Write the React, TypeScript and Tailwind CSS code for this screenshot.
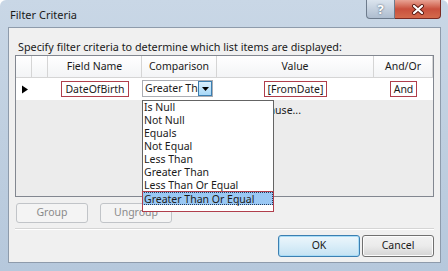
import React from 'react';

const items = [
  'Is Null',
  'Not Null',
  'Equals',
  'Not Equal',
  'Less Than',
  'Greater Than',
  'Less Than Or Equal',
  'Greater Than Or Equal',
];

function TitleButtons() {
  return (
    <div className="flex h-[19px] self-start mr-[7px]">
      <div className="w-[29px] h-[19px] rounded-bl-[4px] border border-[#6d7b8c] border-t-0 bg-gradient-to-b from-[#dbe4ee] to-[#aebdcf] flex items-center justify-center">
        <span className="text-[13px] font-bold text-white leading-none [text-shadow:0_0_2px_#34495f]">?</span>
      </div>
      <div className="w-[46px] h-[19px] rounded-br-[4px] border border-[#7a2a22] border-t-0 border-l-0 bg-gradient-to-b from-[#e8a394] via-[#c9503d] to-[#d36a4c] flex items-center justify-center">
        <svg width="14" height="11" viewBox="0 0 14 11">
          <path d="M3 2 L11 9 M11 2 L3 9" stroke="#5a1a12" strokeWidth="4" strokeLinecap="round" />
          <path d="M3 2 L11 9 M11 2 L3 9" stroke="#ffffff" strokeWidth="2.2" strokeLinecap="round" />
        </svg>
      </div>
    </div>
  );
}

function Annot({ children }: { children: React.ReactNode }) {
  return <span className="border border-[#b03e4c] px-[3px] leading-[13px] h-[16px] inline-flex items-center">{children}</span>;
}

export default function App() {
  return (
    <div className="w-[448px] h-[271px] overflow-hidden bg-gradient-to-b from-[#c9d7e6] via-[#bfcfe0] to-[#b6c8dc] flex flex-col rounded-t-[6px] font-['Noto_Sans','Liberation_Sans',sans-serif] text-[10.5px] text-[#1a1a1a]">
      <div className="h-[27px] flex items-start justify-between shrink-0">
        <span className="pl-[10px] pt-[7px] leading-[16px] text-[11px]">Filter Criteria</span>
        <TitleButtons />
      </div>

      <div className="mx-[7px] ml-[8px] h-[236px] bg-[#f0f0f0] border border-[#8e9bab] flex flex-col px-[6px]">
        <div className="pt-[11px] pl-[3px] leading-[16px] h-[27px] text-[10.8px]">
          Specify filter criteria to determine which list items are displayed:
        </div>

        <div className="h-[142px] border border-[#828790] bg-[#ececec] flex flex-col">
          <div className="grid grid-cols-[16px_16px_94px_75px_157px_59px] h-[22px] bg-gradient-to-b from-[#ffffff] to-[#f3f4f6] border-b border-[#d5d5d5]">
            <div className="border-r border-[#d5d5d5]" />
            <div className="border-r border-[#d5d5d5]" />
            <div className="border-r border-[#d5d5d5] flex items-center justify-center">Field Name</div>
            <div className="border-r border-[#d5d5d5] flex items-center justify-center">Comparison</div>
            <div className="border-r border-[#d5d5d5] flex items-center justify-center">Value</div>
            <div className="border-r border-[#d5d5d5] flex items-center justify-center">And/Or</div>
          </div>

          <div className="grid grid-cols-[16px_16px_94px_75px_157px_59px] h-[22px] bg-white">
            <div className="flex items-center justify-center pl-[1px]">
              <svg width="8" height="9" viewBox="0 0 8 9">
                <path d="M1 0.5 L7 4.5 L1 8.5 Z" fill="#000" />
              </svg>
            </div>
            <div />
            <div className="flex items-center justify-center">
              <Annot>DateOfBirth</Annot>
            </div>
            <div className="relative">
              <div className="mt-[2px] w-[71px] h-[17px] border border-[#abadb3] bg-white flex items-center overflow-hidden">
                <span className="pl-[2px] whitespace-nowrap flex-1 overflow-hidden leading-[13px]">Greater Than Or Equal</span>
                <div className="w-[14px] h-[15px] border border-[#3c7fb1] bg-gradient-to-b from-[#d9effc] to-[#a7d8f8] flex items-center justify-center shrink-0">
                  <svg width="7" height="4" viewBox="0 0 7 4">
                    <path d="M0 0 L7 0 L3.5 4 Z" fill="#000" />
                  </svg>
                </div>
              </div>

              <div className="absolute left-0 top-full w-[132px] z-10 bg-white border border-[#646464] border-b-0 pb-[6px] flex flex-col">
                {items.map((it, i) => (
                  <div
                    key={it}
                    className={
                      i === items.length - 1
                        ? 'h-[13px] leading-[12px] pl-[1px] bg-[#9ac8f4] border border-dotted border-[#243b5c] -ml-[1px] whitespace-nowrap'
                        : 'h-[13px] leading-[13px] pl-[1px] whitespace-nowrap'
                    }
                  >
                    {it}
                  </div>
                ))}
                <div className="absolute left-[-1px] right-[-1px] bottom-[-1px] h-[21px] border border-[#b03e4c]" />
              </div>
            </div>
            <div className="flex items-center justify-center">
              <Annot>[FromDate]</Annot>
            </div>
            <div className="flex items-center justify-center">
              <Annot>And</Annot>
            </div>
          </div>

          <div className="h-[22px] w-[285px] flex items-center justify-end whitespace-nowrap">
            Click here to add a new clause...
          </div>
        </div>

        <div className="flex gap-[12px] mt-[6px] pl-[1px]">
          <div className="w-[72px] h-[20px] rounded-[3px] border border-[#c1c4c8] bg-[#f4f4f4] text-[#8a8a8a] flex items-center justify-center">Group</div>
          <div className="w-[72px] h-[20px] rounded-[3px] border border-[#c1c4c8] bg-[#f4f4f4] text-[#8a8a8a] flex items-center justify-center">Ungroup</div>
        </div>

        <div className="mt-[5px] border-t border-[#d5d5d5] border-b border-b-white" />

        <div className="flex justify-end gap-[2px] mt-[5px]">
          <div className="w-[82px] h-[22px] rounded-[3px] border border-[#3c7fb1] bg-gradient-to-b from-[#edf6fb] via-[#d9edf8] to-[#c4e2f3] shadow-[inset_0_0_0_1px_#a8dcf7] flex items-center justify-center">OK</div>
          <div className="w-[72px] h-[22px] rounded-[3px] border border-[#707070] bg-gradient-to-b from-[#f2f2f2] via-[#ebebeb] to-[#d4d4d4] shadow-[inset_0_0_0_1px_#fcfcfc] flex items-center justify-center">Cancel</div>
        </div>
      </div>
    </div>
  );
}
